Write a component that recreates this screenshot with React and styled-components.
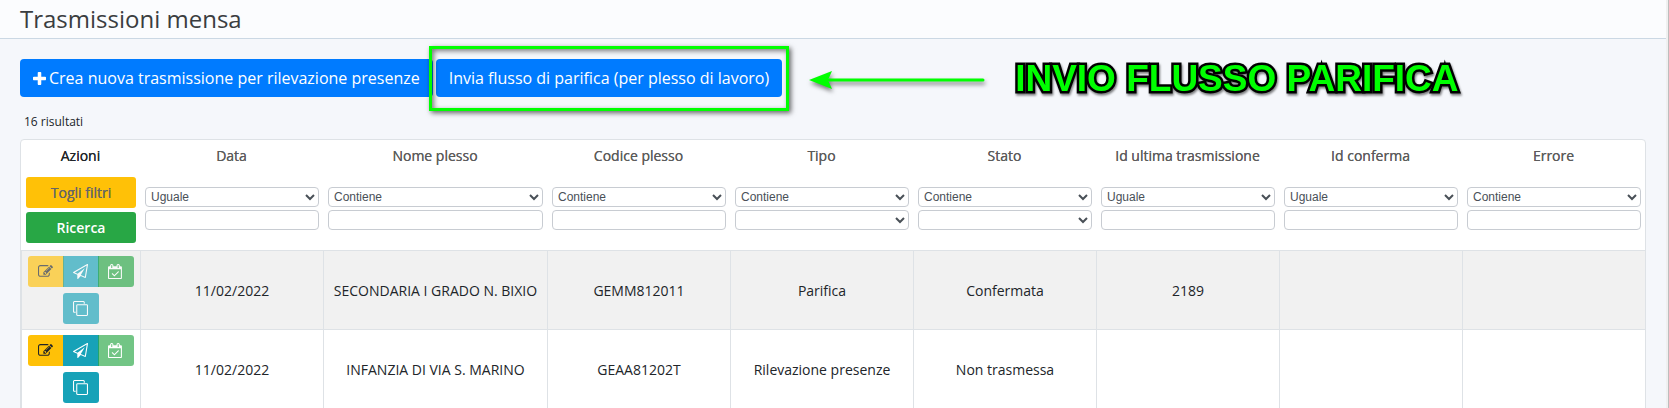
import React from "react"
import styled, { createGlobalStyle, css } from "styled-components"

const columns = [
  { name: "Data", operator: "Uguale", field: "input" },
  { name: "Nome plesso", operator: "Contiene", field: "input", width: 224 },
  { name: "Codice plesso", operator: "Contiene", field: "input" },
  { name: "Tipo", operator: "Contiene", field: "select" },
  { name: "Stato", operator: "Contiene", field: "select" },
  { name: "Id ultima trasmissione", operator: "Uguale", field: "input" },
  { name: "Id conferma", operator: "Uguale", field: "input" },
  { name: "Errore", operator: "Contiene", field: "input" },
]

const rows = [
  {
    locked: true,
    values: [
      "11/02/2022",
      "SECONDARIA I GRADO N. BIXIO",
      "GEMM812011",
      "Parifica",
      "Confermata",
      "2189",
      "",
      "",
    ],
  },
  {
    locked: false,
    values: [
      "11/02/2022",
      "INFANZIA DI VIA S. MARINO",
      "GEAA81202T",
      "Rilevazione presenze",
      "Non trasmessa",
      "",
      "",
      "",
    ],
  },
]

const icons = {
  edit:
    "M888 1184l116-116-152-152-116 116v56h96v96h56zm440-720q-16-16-33 1l-350 350q-17 17-1 33t33-1l350-350q17-17 1-33zm80 594v190q0 119-84.5 203.5t-203.5 84.5h-832q-119 0-203.5-84.5t-84.5-203.5v-832q0-119 84.5-203.5t203.5-84.5h832q63 0 117 25 15 7 18 23 3 17-9 29l-49 49q-14 14-32 8-23-6-45-6h-832q-66 0-113 47t-47 113v832q0 66 47 113t113 47h832q66 0 113-47t47-113v-126q0-13 9-22l64-64q15-15 35-7t20 29zm-96-738l288 288-672 672h-288v-288zm444 132l-92 92-288-288 92-92q28-28 68-28t68 28l152 152q28 28 28 68t-28 68z",
  send:
    "M1764 11q33 24 27 64l-256 1536q-5 29-32 45-14 8-31 8-11 0-24-5l-527-215-298 327q-18 21-47 21-14 0-23-4-19-7-30-23.5t-11-36.5v-452l-472-193q-37-14-40-55-3-39 32-59l1664-960q35-21 68 2zm-342 1499l221-1323-1434 827 336 137 863-639-478 797z",
  check:
    "M1303 964l-512 512q-10 9-23 9t-23-9l-288-288q-9-10-9-23t9-22l46-46q9-9 22-9t23 9l220 220 444-444q10-9 23-9t22 9l46 46q9 9 9 22t-9 23zm-1175 700h1408v-1024h-1408v1024zm384-1216v-288q0-14-9-23t-23-9h-64q-14 0-23 9t-9 23v288q0 14 9 23t23 9h64q14 0 23-9t9-23zm768 0v-288q0-14-9-23t-23-9h-64q-14 0-23 9t-9 23v288q0 14 9 23t23 9h64q14 0 23-9t9-23zm384-64v1280q0 52-38 90t-90 38h-1408q-52 0-90-38t-38-90v-1280q0-52 38-90t90-38h128v-96q0-66 47-113t113-47h64q66 0 113 47t47 113v96h384v-96q0-66 47-113t113-47h64q66 0 113 47t47 113v96h128q52 0 90 38t38 90z",
  clone:
    "M1664 1632v-1088q0-13-9.5-22.5t-22.5-9.5h-1088q-13 0-22.5 9.5t-9.5 22.5v1088q0 13 9.5 22.5t22.5 9.5h1088q13 0 22.5-9.5t9.5-22.5zm128-1088v1088q0 66-47 113t-113 47h-1088q-66 0-113-47t-47-113v-1088q0-66 47-113t113-47h1088q66 0 113 47t47 113zm-384-384v160h-128v-160q0-13-9.5-22.5t-22.5-9.5h-1088q-13 0-22.5 9.5t-9.5 22.5v1088q0 13 9.5 22.5t22.5 9.5h160v128h-160q-66 0-113-47t-47-113v-1088q0-66 47-113t113-47h1088q66 0 113 47t47 113z",
}

const Icon = ({ name }) => (
  <svg width="15" height="15" viewBox="0 0 1792 1792" aria-hidden="true">
    <path fill="currentColor" d={icons[name]} />
  </svg>
)

const PlusIcon = () => (
  <svg width="13" height="13" viewBox="192 128 1408 1408" aria-hidden="true">
    <path
      fill="currentColor"
      d="M1600 736v192q0 40-28 68t-68 28h-416v416q0 40-28 68t-68 28h-192q-40 0-68-28t-28-68v-416h-416q-40 0-68-28t-28-68v-192q0-40 28-68t68-28h416v-416q0-40 28-68t68-28h192q40 0 68 28t28 68v416h416q40 0 68 28t28 68z"
    />
  </svg>
)

const RowActions = ({ locked }) => (
  <Actions>
    <Group>
      <ActionButton color="yellow" disabled={locked} aria-label="Modifica">
        <Icon name="edit" />
      </ActionButton>
      <ActionButton color="teal" disabled={locked} aria-label="Trasmetti">
        <Icon name="send" />
      </ActionButton>
      <ActionButton color="green" disabled aria-label="Verifica">
        <Icon name="check" />
      </ActionButton>
    </Group>
    <Group>
      <ActionButton color="teal" disabled={locked} aria-label="Duplica">
        <Icon name="clone" />
      </ActionButton>
    </Group>
  </Actions>
)

const Filter = ({ column }) => (
  <Filters>
    <Select aria-label={`Operatore ${column.name}`} defaultValue={column.operator}>
      <option>Uguale</option>
      <option>Contiene</option>
    </Select>
    {column.field === "select" ? (
      <Select aria-label={column.name}>
        <option></option>
      </Select>
    ) : (
      <Input type="text" aria-label={column.name} />
    )}
  </Filters>
)

const App = () => {
  return (
    <Page>
      <GlobalStyle />
      <Header>
        <Title>Trasmissioni mensa</Title>
      </Header>
      <Main>
        <Toolbar>
          <PrimaryButton>
            <PlusIcon />
            Crea nuova trasmissione per rilevazione presenze
          </PrimaryButton>
          <Highlight>
            <PrimaryButton>Invia flusso di parifica (per plesso di lavoro)</PrimaryButton>
          </Highlight>
          <Arrow width="176" height="26" viewBox="0 0 176 26" aria-hidden="true">
            <path d="M20 15H174" stroke="#00ff00" strokeWidth="3" strokeLinecap="round" />
            <path d="M0 15L23 6L19 15L23 24Z" fill="#00ff00" />
          </Arrow>
          <Callout>INVIO FLUSSO PARIFICA</Callout>
        </Toolbar>
        <Count>16 risultati</Count>
        <TableBox>
          <Table>
            <colgroup>
              <col width="119" />
              {columns.map(column => (
                <col key={column.name} width={column.width} />
              ))}
            </colgroup>
            <thead>
              <tr>
                <HeadCell $dark>Azioni</HeadCell>
                {columns.map(column => (
                  <HeadCell key={column.name}>{column.name}</HeadCell>
                ))}
              </tr>
              <tr>
                <FilterCell>
                  <Filters $gap={4}>
                    <FilterButton color="yellow">Togli filtri</FilterButton>
                    <FilterButton color="green">Ricerca</FilterButton>
                  </Filters>
                </FilterCell>
                {columns.map(column => (
                  <FilterCell key={column.name}>
                    <Filter column={column} />
                  </FilterCell>
                ))}
              </tr>
            </thead>
            <tbody>
              {rows.map((row, index) => (
                <Row key={index}>
                  <Cell>
                    <RowActions locked={row.locked} />
                  </Cell>
                  {row.values.map((value, i) => (
                    <Cell key={columns[i].name}>{value}</Cell>
                  ))}
                </Row>
              ))}
            </tbody>
          </Table>
        </TableBox>
      </Main>
    </Page>
  )
}

const GlobalStyle = createGlobalStyle`
  * {
    box-sizing: border-box;
  }

  body {
    margin: 0;
    background: #f5f7fb;
    color: #212529;
    font-family: "Open Sans", sans-serif;
    font-size: 14px;
    line-height: 20px;
  }
`

const palette = {
  yellow: css`
    background: #ffc107;
    color: #212529;
  `,
  teal: css`
    background: #17a2b8;
    color: #fff;
  `,
  green: css`
    background: #28a745;
    color: #fff;
  `,
}

const Page = styled.div`
  min-height: 100vh;
  padding-right: 2px;
  border-right: 1px solid #bdbdbd;
  background: linear-gradient(#f5f7fb, #f5f7fb) content-box, #f0f0f0;
`

const Header = styled.header`
  height: 39px;
  padding: 0 20px;
  background: #fbfcfe;
  border-bottom: 1px solid #cbd8e4;
`

const Title = styled.h1`
  margin: 0;
  font-size: 24px;
  font-weight: 400;
  line-height: 38px;
  color: #3a3d40;
`

const Main = styled.main`
  padding: 20px 20px 0;
`

const Toolbar = styled.div`
  display: flex;
  align-items: center;
  gap: 3px;
  white-space: nowrap;
`

const PrimaryButton = styled.button`
  display: inline-flex;
  align-items: center;
  gap: 3px;
  height: 38px;
  padding: 0 13px;
  border: none;
  border-radius: 4px;
  background: #007bff;
  color: #fff;
  font: 16px "Open Sans", sans-serif;
`

const Highlight = styled.div`
  position: relative;
  display: flex;

  &::after {
    content: "";
    position: absolute;
    inset: -13px -7px -14px;
    border: 3px solid #00ff00;
    box-shadow: 2px 2px 5px rgba(0, 0, 0, 0.6), inset 2px 2px 5px rgba(0, 0, 0, 0.5);
    pointer-events: none;
  }
`

const Arrow = styled.svg`
  margin-left: 24px;
  overflow: visible;
  filter: drop-shadow(1px 3px 2px rgba(0, 0, 0, 0.5));
`

const Callout = styled.strong`
  margin-left: 27px;
  padding-top: 2px;
  color: #00ff00;
  font: bold 37px/36px "Liberation Sans", Arial, sans-serif;
  -webkit-text-stroke: 5px #000;
  paint-order: stroke fill;
  filter: drop-shadow(1px 2px 1px rgba(0, 0, 0, 0.5));
`

const Count = styled.p`
  margin: 15px 0 7px;
  padding-left: 4px;
  font-size: 12px;
`

const TableBox = styled.div`
  border: 1px solid #dee2e6;
  border-radius: 4px 4px 0 0;
  background: #fff;
`

const Table = styled.table`
  width: 100%;
  table-layout: fixed;
  border-collapse: separate;
  border-spacing: 0;
  text-align: center;
`

const HeadCell = styled.th`
  padding: 6px 4px;
  color: ${props => (props.$dark ? "#212529" : "#5c5c5c")};
  font-weight: 500;
  text-shadow: 0 0 0 currentColor;
`

const FilterCell = styled.td`
  padding: 5px 4px 7px 5px;

  & + & {
    padding-bottom: 10px;
  }
`

const Row = styled.tr`
  &:nth-child(odd) {
    background: #f1f1f1;
  }
`

const Cell = styled.td`
  height: 79px;
  padding: 5px 0;
  border-top: 1px solid #dee2e6;
  border-left: 1px solid #dee2e6;

  & + & {
    padding-top: 7px;
  }
`

const Filters = styled.div`
  display: flex;
  flex-direction: column;
  gap: ${props => props.$gap || 3}px;
`

const field = css`
  width: 100%;
  height: 20px;
  border: 1px solid #c8ccd2;
  border-radius: 4px;
  background: #fff;
  color: #495057;
  font: 12px "Liberation Sans", Arial, sans-serif;
`

const Select = styled.select`
  ${field}
  padding: 0 1px;
`

const Input = styled.input`
  ${field}
  padding: 0 5px;
`

const FilterButton = styled.button`
  ${props => palette[props.color]}
  height: 31px;
  border: none;
  border-radius: 3px;
  font: 600 14px "Open Sans", sans-serif;
  ${props =>
    props.color === "yellow" &&
    css`
      color: #666;
      font-weight: 500;
      text-shadow: 0 0 0 currentColor;
    `}
`

const Actions = styled.div`
  display: flex;
  flex-direction: column;
  align-items: center;
  gap: 6px;
`

const ActionButton = styled.button`
  ${props => palette[props.color]}
  display: flex;
  align-items: center;
  justify-content: center;
  width: 36px;
  height: 31px;
  padding: 0 11px 0 10px;
  border: none;

  &:disabled {
    opacity: 0.65;
  }
`

const Group = styled.div`
  display: flex;

  button + button {
    margin-left: -1px;
  }

  button:first-child {
    border-top-left-radius: 3px;
    border-bottom-left-radius: 3px;
  }

  button:last-child {
    border-top-right-radius: 3px;
    border-bottom-right-radius: 3px;
  }
`

export default App
